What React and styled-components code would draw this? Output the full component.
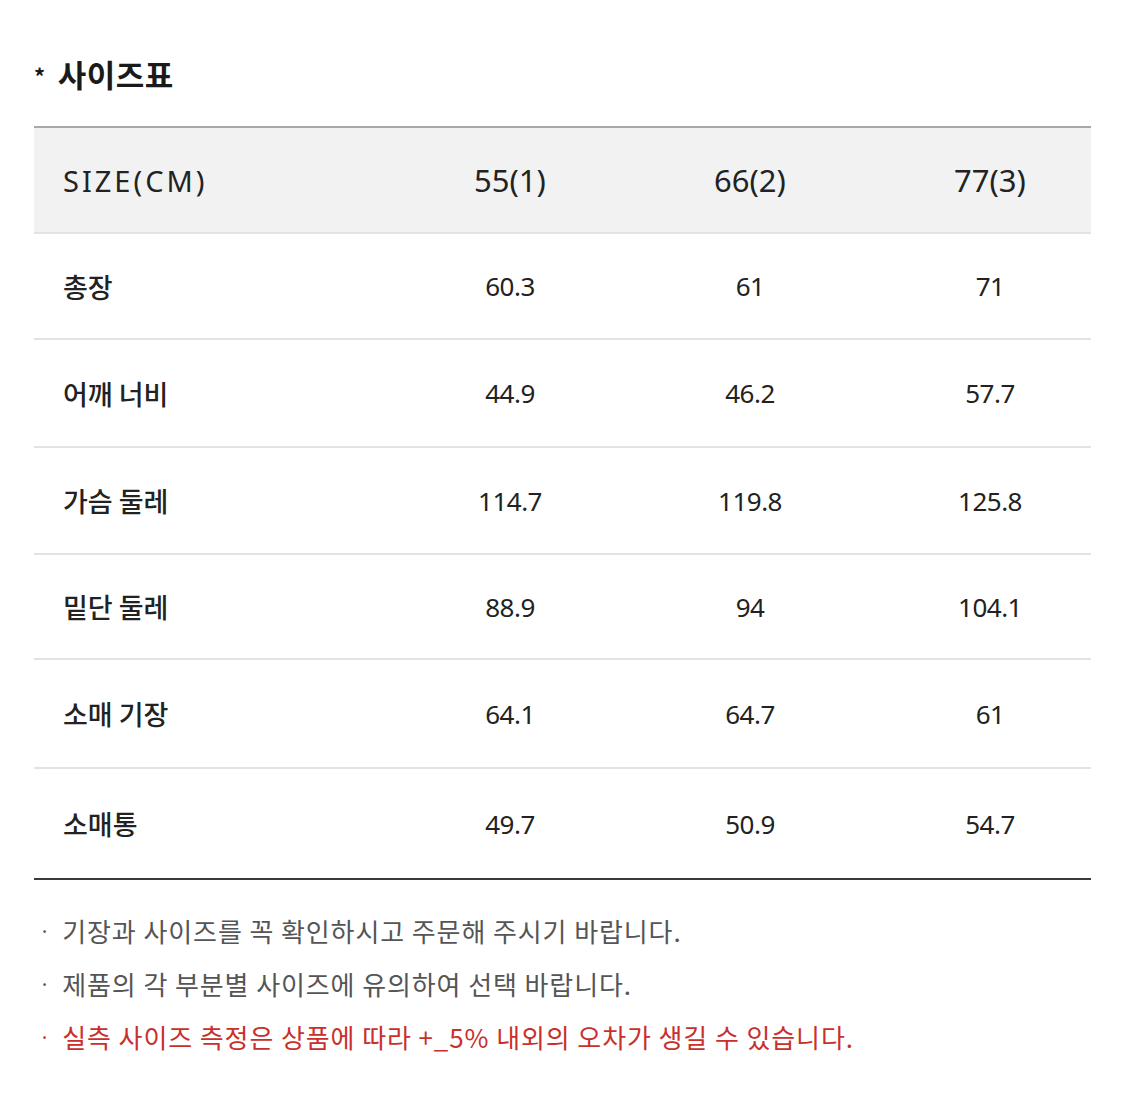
import React from "react";
import styled, { createGlobalStyle } from "styled-components";

const Global = createGlobalStyle`
  html, body { margin: 0; padding: 0; background: #fff; }
  body { font-family: "Noto Sans", "Noto Sans CJK KR", sans-serif; color: #222; }
`;

const Page = styled.div`
  width: 1125px;
  padding: 52px 34px 40px 34px;
  box-sizing: border-box;
`;

const Title = styled.h2`
  margin: 0 0 30px 0;
  display: flex;
  align-items: center;
  gap: 12px;
  font-family: "Noto Sans CJK KR", sans-serif;
  font-weight: 700;
  font-size: 31px;
  line-height: 44px;
  letter-spacing: 0.5px;
  color: #1a1a1a;
`;

const Star = styled.span`
  font-size: 22px;
  font-weight: 700;
  line-height: 1;
  margin-top: 2px;
`;

const Table = styled.div`
  width: 1057px;
  border-top: 2px solid #a8a8a8;
  border-bottom: 2px solid #3a3a3a;
`;

const Row = styled.div`
  display: grid;
  grid-template-columns: 356px 240px 240px 221px;
  height: ${(p) => p.$h}px;
  align-items: center;
  background: ${(p) => (p.$head ? "#f2f2f2" : "#fff")};
  border-bottom: ${(p) => (p.$last ? "none" : "2px solid #e3e3e3")};
  box-sizing: border-box;
`;

const Label = styled.div`
  padding-left: 29px;
  font-family: ${(p) => (p.$head ? `"Noto Sans", sans-serif` : `"Noto Sans CJK KR", sans-serif`)};
  font-size: ${(p) => (p.$head ? "29px" : "27px")};
  font-weight: ${(p) => (p.$head ? 400 : 500)};
  letter-spacing: ${(p) => (p.$head ? "3px" : "0")};
  color: #222;
`;

const Cell = styled.div`
  text-align: center;
  font-family: "Noto Sans", sans-serif;
  font-size: ${(p) => (p.$head ? "31px" : "26px")};
  letter-spacing: ${(p) => (p.$head ? "0" : "-0.5px")};
  color: #222;
  margin-right: ${(p) => (p.$lastCol ? "-19px" : "0")};
`;

const Notes = styled.ul`
  list-style: none;
  margin: 29px 0 0 0;
  padding: 0;
  display: flex;
  flex-direction: column;
  gap: 9px;
`;

const Note = styled.li`
  display: flex;
  align-items: center;
  gap: 12px;
  font-family: "Noto Sans CJK KR", sans-serif;
  font-size: 26px;
  line-height: 44px;
  letter-spacing: 0.9px;
  color: ${(p) => (p.$red ? "#c9302c" : "#555")};
  padding-left: 5px;
`;

const Dot = styled.span`
  font-size: 20px;
  letter-spacing: 0;
`;

const rows = [
  ["총장", "60.3", "61", "71"],
  ["어깨 너비", "44.9", "46.2", "57.7"],
  ["가슴 둘레", "114.7", "119.8", "125.8"],
  ["밑단 둘레", "88.9", "94", "104.1"],
  ["소매 기장", "64.1", "64.7", "61"],
  ["소매통", "49.7", "50.9", "54.7"],
];
const heights = [106, 108, 107, 105, 109, 109];

export default function App() {
  return (
    <Page>
      <Global />
      <Title>
        <Star>*</Star>사이즈표
      </Title>
      <Table>
        <Row $head $h={106}>
          <Label $head>SIZE(CM)</Label>
          <Cell $head>55(1)</Cell>
          <Cell $head>66(2)</Cell>
          <Cell $head $lastCol>77(3)</Cell>
        </Row>
        {rows.map((r, i) => (
          <Row key={r[0]} $h={heights[i]} $last={i === rows.length - 1}>
            <Label>{r[0]}</Label>
            <Cell>{r[1]}</Cell>
            <Cell>{r[2]}</Cell>
            <Cell $lastCol>{r[3]}</Cell>
          </Row>
        ))}
      </Table>
      <Notes>
        <Note>
          <Dot>·</Dot>기장과 사이즈를 꼭 확인하시고 주문해 주시기 바랍니다.
        </Note>
        <Note>
          <Dot>·</Dot>제품의 각 부분별 사이즈에 유의하여 선택 바랍니다.
        </Note>
        <Note $red>
          <Dot>·</Dot>실측 사이즈 측정은 상품에 따라 +_5% 내외의 오차가 생길 수 있습니다.
        </Note>
      </Notes>
    </Page>
  );
}
